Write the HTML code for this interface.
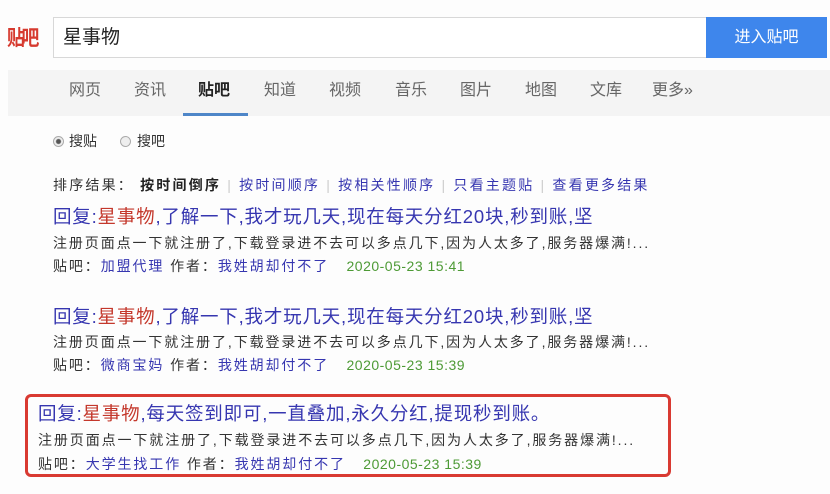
<!DOCTYPE html>
<html><head><meta charset="utf-8"><style>
*{margin:0;padding:0;box-sizing:border-box}
body{width:830px;height:494px;background:#fdfdfd;font-family:"Liberation Sans","Noto Sans CJK SC",sans-serif;position:relative;overflow:hidden;color:#333}
.a{position:absolute;white-space:nowrap}
.logo{left:7px;top:25px;font-size:21px;font-weight:bold;color:#d63a2f;letter-spacing:-4px;line-height:28px;transform:scaleX(0.85);transform-origin:left}
.inp{left:53px;top:17px;width:655px;height:41px;border:1px solid #d8d8d8;background:#fff;font-size:19px;line-height:39px;padding-left:9px;color:#222}
.btn{left:706px;top:17px;width:121px;height:41px;background:#3e86ec;color:#fff;font-size:16px;line-height:41px;text-align:center}
.nav{left:8px;top:70px;width:822px;height:46px;background:#f4f4f4}
.ni{top:81px;font-size:16px;color:#666;line-height:20px}
.ul{left:183px;top:113px;width:65px;height:3px;background:#4e86c8}
.t{font-size:18.5px;color:#3636b0;line-height:24px;letter-spacing:0.8px}
.t b{font-weight:normal;color:#c4382c}
.d{font-size:14px;color:#333;line-height:18px;letter-spacing:1.9px}
.m{font-size:14px;color:#333;line-height:18px;letter-spacing:1.9px}
.m span{color:#3636b0}
.m i{font-style:normal;color:#4d9a35;letter-spacing:0.5px}
.s{font-size:14px;line-height:18px;letter-spacing:2.2px}
.box{left:25px;top:394px;width:646px;height:83px;border:3px solid #d93a32;border-radius:6px}
.rad{width:11px;height:11px;border-radius:50%;border:1px solid #aaa;background:#eee}
</style></head><body>
<div class="a logo">贴吧</div>
<div class="a inp">星事物</div>
<div class="a btn">进入贴吧</div>
<div class="a nav"></div>
<div class="a ni" style="left:69px">网页</div>
<div class="a ni" style="left:134px">资讯</div>
<div class="a ni" style="left:198px;color:#222;font-weight:bold">贴吧</div>
<div class="a ni" style="left:264px">知道</div>
<div class="a ni" style="left:329px">视频</div>
<div class="a ni" style="left:395px">音乐</div>
<div class="a ni" style="left:460px">图片</div>
<div class="a ni" style="left:525px">地图</div>
<div class="a ni" style="left:590px">文库</div>
<div class="a ni" style="left:652px">更多»</div>
<div class="a ul"></div>
<div class="a rad" style="left:53px;top:136px;background:radial-gradient(circle,#555 2px,#eee 3px)"></div>
<div class="a d" style="left:69px;top:132px;letter-spacing:0">搜贴</div>
<div class="a rad" style="left:120px;top:136px"></div>
<div class="a d" style="left:137px;top:132px;letter-spacing:0">搜吧</div>
<div class="a s" style="left:53px;top:176px">排序结果： <b style="color:#222">按时间倒序</b> <span style="color:#ccc">|</span> <span style="color:#3636b0">按时间顺序</span> <span style="color:#ccc">|</span> <span style="color:#3636b0">按相关性顺序</span> <span style="color:#ccc">|</span> <span style="color:#3636b0">只看主题贴</span> <span style="color:#ccc">|</span> <span style="color:#3636b0">查看更多结果</span></div>

<div class="a t" style="left:53px;top:205px">回复:<b>星事物</b>,了解一下,我才玩几天,现在每天分红20块,秒到账,坚</div>
<div class="a d" style="left:53px;top:234px">注册页面点一下就注册了,下载登录进不去可以多点几下,因为人太多了,服务器爆满!...</div>
<div class="a m" style="left:53px;top:257px">贴吧：<span>加盟代理</span> 作者：<span>我姓胡却付不了</span> &nbsp; <i>2020-05-23 15:41</i></div>

<div class="a t" style="left:53px;top:305px">回复:<b>星事物</b>,了解一下,我才玩几天,现在每天分红20块,秒到账,坚</div>
<div class="a d" style="left:53px;top:333px">注册页面点一下就注册了,下载登录进不去可以多点几下,因为人太多了,服务器爆满!...</div>
<div class="a m" style="left:53px;top:356px">贴吧：<span>微商宝妈</span> 作者：<span>我姓胡却付不了</span> &nbsp; <i>2020-05-23 15:39</i></div>

<div class="a box"></div>
<div class="a t" style="left:38px;top:402px">回复:<b>星事物</b>,每天签到即可,一直叠加,永久分红,提现秒到账。</div>
<div class="a d" style="left:38px;top:431px">注册页面点一下就注册了,下载登录进不去可以多点几下,因为人太多了,服务器爆满!...</div>
<div class="a m" style="left:38px;top:455px">贴吧：<span>大学生找工作</span> 作者：<span>我姓胡却付不了</span> &nbsp; <i>2020-05-23 15:39</i></div>
</body></html>
